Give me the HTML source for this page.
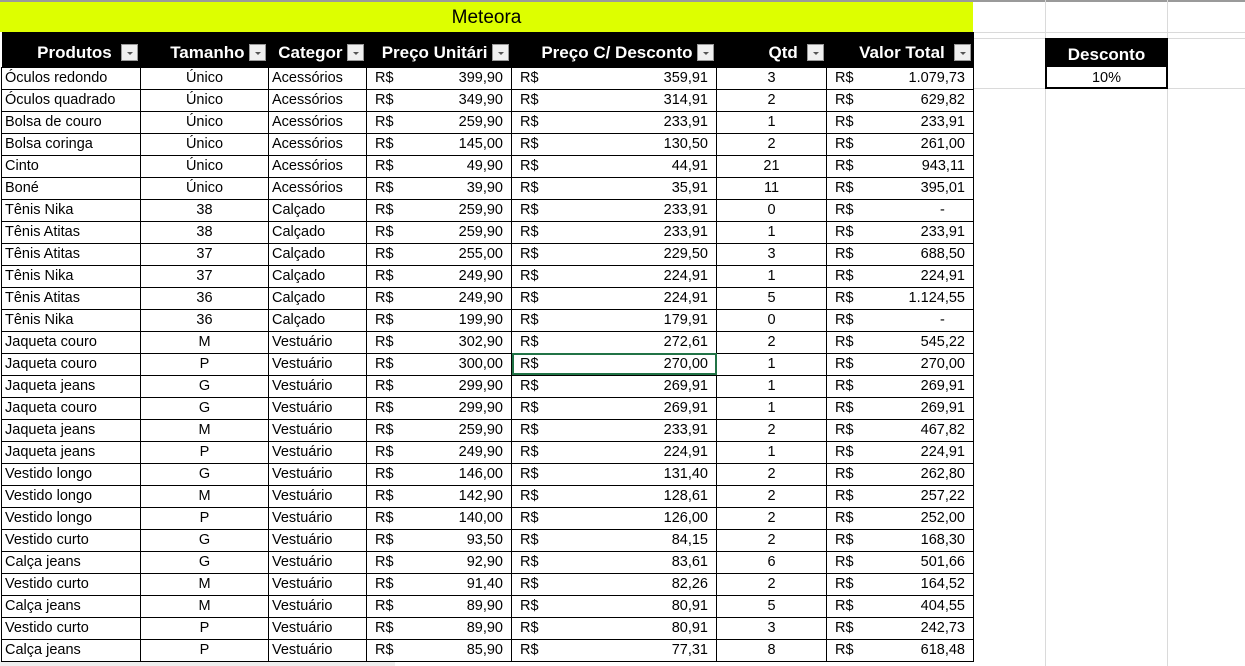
<!DOCTYPE html>
<html><head><meta charset="utf-8"><style>
*{margin:0;padding:0;box-sizing:border-box}
body{width:1245px;height:666px;overflow:hidden;background:#fff;font-family:"Liberation Sans",Arial,sans-serif;position:relative}
.grid{position:absolute;background:#dadada}
.title{position:absolute;left:0;top:2px;width:973px;height:30px;background:#ddff00;font-size:19px;text-align:center;line-height:32px;color:#000}
table{position:absolute;left:1px;top:32px;border-collapse:collapse;table-layout:fixed}
td{border:1px solid #000;height:22px;font-size:14.5px;padding:0 3px;white-space:nowrap;overflow:hidden;color:#000}
th{background:#000;color:#fff;height:35px;font-size:17px;font-weight:bold;text-align:right;padding:0 3px 4px;vertical-align:bottom;white-space:nowrap;overflow:hidden;position:relative}
th span.dd{display:inline-block;width:17px;height:17px;background:#f0f0f0;border:1px solid #999;vertical-align:-3px;margin-left:4px;position:relative}
th span.dd:after{content:"";position:absolute;left:5px;top:7px;border-left:3px solid transparent;border-right:3px solid transparent;border-top:3px solid #555}
.c{text-align:center}
.m{display:flex;justify-content:space-between;padding:0 5px}
.sel{outline:2px solid #217346;outline-offset:-2px}
</style></head><body>
<div class="grid" style="left:0;top:0;width:1245px;height:2px;background:#9a9a9a"></div>
<div class="grid" style="left:973px;top:32px;width:272px;height:1px"></div>
<div class="grid" style="left:973px;top:38px;width:272px;height:1px"></div>
<div class="grid" style="left:1045px;top:0;width:1px;height:666px"></div>
<div class="grid" style="left:1167px;top:0;width:1px;height:666px"></div>
<div class="grid" style="left:973px;top:88px;width:272px;height:1px"></div>
<div class="grid" style="left:0;top:661px;width:395px;height:5px;background:#eee"></div>
<div class="title">Meteora</div>
<div style="position:absolute;left:1045px;top:38px;width:123px;height:51px;border:2px solid #000">
<div style="background:#000;color:#fff;font-weight:bold;font-size:17px;text-align:center;height:27px;line-height:30px">Desconto</div>
<div style="text-align:center;font-size:14.5px;line-height:22px">10%</div></div>
<table>
<colgroup><col style="width:139px"><col style="width:128px"><col style="width:98px"><col style="width:145px"><col style="width:205px"><col style="width:110px"><col style="width:147px"></colgroup>
<tr><th>Produtos <span class="dd"></span></th><th>Tamanho<span class="dd"></span></th><th>Categor<span class="dd"></span></th><th>Preço Unitári<span class="dd"></span></th><th>Preço C/ Desconto<span class="dd"></span></th><th>Qtd <span class="dd"></span></th><th>Valor Total <span class="dd"></span></th></tr>
<tr><td>Óculos redondo</td><td class="c">Único</td><td>Acessórios</td><td><div class="m"><span>R$</span><span>399,90</span></div></td><td><div class="m"><span>R$</span><span>359,91</span></div></td><td class="c">3</td><td><div class="m"><span>R$</span><span>1.079,73</span></div></td></tr>
<tr><td>Óculos quadrado</td><td class="c">Único</td><td>Acessórios</td><td><div class="m"><span>R$</span><span>349,90</span></div></td><td><div class="m"><span>R$</span><span>314,91</span></div></td><td class="c">2</td><td><div class="m"><span>R$</span><span>629,82</span></div></td></tr>
<tr><td>Bolsa de couro</td><td class="c">Único</td><td>Acessórios</td><td><div class="m"><span>R$</span><span>259,90</span></div></td><td><div class="m"><span>R$</span><span>233,91</span></div></td><td class="c">1</td><td><div class="m"><span>R$</span><span>233,91</span></div></td></tr>
<tr><td>Bolsa coringa</td><td class="c">Único</td><td>Acessórios</td><td><div class="m"><span>R$</span><span>145,00</span></div></td><td><div class="m"><span>R$</span><span>130,50</span></div></td><td class="c">2</td><td><div class="m"><span>R$</span><span>261,00</span></div></td></tr>
<tr><td>Cinto</td><td class="c">Único</td><td>Acessórios</td><td><div class="m"><span>R$</span><span>49,90</span></div></td><td><div class="m"><span>R$</span><span>44,91</span></div></td><td class="c">21</td><td><div class="m"><span>R$</span><span>943,11</span></div></td></tr>
<tr><td>Boné</td><td class="c">Único</td><td>Acessórios</td><td><div class="m"><span>R$</span><span>39,90</span></div></td><td><div class="m"><span>R$</span><span>35,91</span></div></td><td class="c">11</td><td><div class="m"><span>R$</span><span>395,01</span></div></td></tr>
<tr><td>Tênis Nika</td><td class="c">38</td><td>Calçado</td><td><div class="m"><span>R$</span><span>259,90</span></div></td><td><div class="m"><span>R$</span><span>233,91</span></div></td><td class="c">0</td><td><div class="m"><span>R$</span><span>-&nbsp;&nbsp;&nbsp;&nbsp;&nbsp;</span></div></td></tr>
<tr><td>Tênis Atitas</td><td class="c">38</td><td>Calçado</td><td><div class="m"><span>R$</span><span>259,90</span></div></td><td><div class="m"><span>R$</span><span>233,91</span></div></td><td class="c">1</td><td><div class="m"><span>R$</span><span>233,91</span></div></td></tr>
<tr><td>Tênis Atitas</td><td class="c">37</td><td>Calçado</td><td><div class="m"><span>R$</span><span>255,00</span></div></td><td><div class="m"><span>R$</span><span>229,50</span></div></td><td class="c">3</td><td><div class="m"><span>R$</span><span>688,50</span></div></td></tr>
<tr><td>Tênis Nika</td><td class="c">37</td><td>Calçado</td><td><div class="m"><span>R$</span><span>249,90</span></div></td><td><div class="m"><span>R$</span><span>224,91</span></div></td><td class="c">1</td><td><div class="m"><span>R$</span><span>224,91</span></div></td></tr>
<tr><td>Tênis Atitas</td><td class="c">36</td><td>Calçado</td><td><div class="m"><span>R$</span><span>249,90</span></div></td><td><div class="m"><span>R$</span><span>224,91</span></div></td><td class="c">5</td><td><div class="m"><span>R$</span><span>1.124,55</span></div></td></tr>
<tr><td>Tênis Nika</td><td class="c">36</td><td>Calçado</td><td><div class="m"><span>R$</span><span>199,90</span></div></td><td><div class="m"><span>R$</span><span>179,91</span></div></td><td class="c">0</td><td><div class="m"><span>R$</span><span>-&nbsp;&nbsp;&nbsp;&nbsp;&nbsp;</span></div></td></tr>
<tr><td>Jaqueta couro</td><td class="c">M</td><td>Vestuário</td><td><div class="m"><span>R$</span><span>302,90</span></div></td><td><div class="m"><span>R$</span><span>272,61</span></div></td><td class="c">2</td><td><div class="m"><span>R$</span><span>545,22</span></div></td></tr>
<tr><td>Jaqueta couro</td><td class="c">P</td><td>Vestuário</td><td><div class="m"><span>R$</span><span>300,00</span></div></td><td class="sel"><div class="m"><span>R$</span><span>270,00</span></div></td><td class="c">1</td><td><div class="m"><span>R$</span><span>270,00</span></div></td></tr>
<tr><td>Jaqueta jeans</td><td class="c">G</td><td>Vestuário</td><td><div class="m"><span>R$</span><span>299,90</span></div></td><td><div class="m"><span>R$</span><span>269,91</span></div></td><td class="c">1</td><td><div class="m"><span>R$</span><span>269,91</span></div></td></tr>
<tr><td>Jaqueta couro</td><td class="c">G</td><td>Vestuário</td><td><div class="m"><span>R$</span><span>299,90</span></div></td><td><div class="m"><span>R$</span><span>269,91</span></div></td><td class="c">1</td><td><div class="m"><span>R$</span><span>269,91</span></div></td></tr>
<tr><td>Jaqueta jeans</td><td class="c">M</td><td>Vestuário</td><td><div class="m"><span>R$</span><span>259,90</span></div></td><td><div class="m"><span>R$</span><span>233,91</span></div></td><td class="c">2</td><td><div class="m"><span>R$</span><span>467,82</span></div></td></tr>
<tr><td>Jaqueta jeans</td><td class="c">P</td><td>Vestuário</td><td><div class="m"><span>R$</span><span>249,90</span></div></td><td><div class="m"><span>R$</span><span>224,91</span></div></td><td class="c">1</td><td><div class="m"><span>R$</span><span>224,91</span></div></td></tr>
<tr><td>Vestido longo</td><td class="c">G</td><td>Vestuário</td><td><div class="m"><span>R$</span><span>146,00</span></div></td><td><div class="m"><span>R$</span><span>131,40</span></div></td><td class="c">2</td><td><div class="m"><span>R$</span><span>262,80</span></div></td></tr>
<tr><td>Vestido longo</td><td class="c">M</td><td>Vestuário</td><td><div class="m"><span>R$</span><span>142,90</span></div></td><td><div class="m"><span>R$</span><span>128,61</span></div></td><td class="c">2</td><td><div class="m"><span>R$</span><span>257,22</span></div></td></tr>
<tr><td>Vestido longo</td><td class="c">P</td><td>Vestuário</td><td><div class="m"><span>R$</span><span>140,00</span></div></td><td><div class="m"><span>R$</span><span>126,00</span></div></td><td class="c">2</td><td><div class="m"><span>R$</span><span>252,00</span></div></td></tr>
<tr><td>Vestido curto</td><td class="c">G</td><td>Vestuário</td><td><div class="m"><span>R$</span><span>93,50</span></div></td><td><div class="m"><span>R$</span><span>84,15</span></div></td><td class="c">2</td><td><div class="m"><span>R$</span><span>168,30</span></div></td></tr>
<tr><td>Calça jeans</td><td class="c">G</td><td>Vestuário</td><td><div class="m"><span>R$</span><span>92,90</span></div></td><td><div class="m"><span>R$</span><span>83,61</span></div></td><td class="c">6</td><td><div class="m"><span>R$</span><span>501,66</span></div></td></tr>
<tr><td>Vestido curto</td><td class="c">M</td><td>Vestuário</td><td><div class="m"><span>R$</span><span>91,40</span></div></td><td><div class="m"><span>R$</span><span>82,26</span></div></td><td class="c">2</td><td><div class="m"><span>R$</span><span>164,52</span></div></td></tr>
<tr><td>Calça jeans</td><td class="c">M</td><td>Vestuário</td><td><div class="m"><span>R$</span><span>89,90</span></div></td><td><div class="m"><span>R$</span><span>80,91</span></div></td><td class="c">5</td><td><div class="m"><span>R$</span><span>404,55</span></div></td></tr>
<tr><td>Vestido curto</td><td class="c">P</td><td>Vestuário</td><td><div class="m"><span>R$</span><span>89,90</span></div></td><td><div class="m"><span>R$</span><span>80,91</span></div></td><td class="c">3</td><td><div class="m"><span>R$</span><span>242,73</span></div></td></tr>
<tr><td>Calça jeans</td><td class="c">P</td><td>Vestuário</td><td><div class="m"><span>R$</span><span>85,90</span></div></td><td><div class="m"><span>R$</span><span>77,31</span></div></td><td class="c">8</td><td><div class="m"><span>R$</span><span>618,48</span></div></td></tr>
</table>
</body></html>
